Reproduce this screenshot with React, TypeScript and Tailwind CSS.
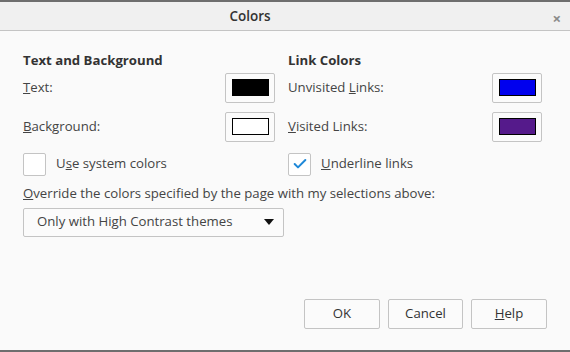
import { Check } from "lucide-react";

function Swatch({ color }: { color: string }) {
  return (
    <div className="flex h-[30px] w-[50px] items-center justify-center rounded-[2px] border border-[#c4c4c4] bg-[#fbfbfb]">
      <div className="h-[17px] w-[37px] border border-black" style={{ background: color }} />
    </div>
  );
}

function Row({ label, color }: { label: React.ReactNode; color: string }) {
  return (
    <div className="flex items-center justify-between">
      <span>{label}</span>
      <Swatch color={color} />
    </div>
  );
}

function Btn({ children }: { children: React.ReactNode }) {
  return (
    <button className="flex h-[30px] items-center justify-center rounded-[2px] border border-[#c4c4c4] bg-[#fbfbfb] text-[#333]">
      {children}
    </button>
  );
}

export default function App() {
  return (
    <div className="flex h-[352px] w-[570px] flex-col border-t-2 border-b-2 border-[#6e6e6e] bg-[#fafafa] text-[13.2px] text-[#444] [font-family:'Open_Sans',sans-serif]">
      {/* Title bar */}
      <div className="relative flex h-[29px] items-center justify-center border-b border-[#c4c4c4] bg-[#f0f0f0]">
        <span className="mr-[70px] text-[13.5px] font-semibold text-[#333]">Colors</span>
        <span className="absolute right-[9px] top-[5px] text-[15px] font-bold text-[#8a8a8a]">×</span>
      </div>

      <div className="flex flex-1 flex-col pl-[23px] pr-[28px] pt-[20px]">
        <div className="flex gap-[13px]">
          <div className="flex w-[252px] flex-col">
            <div className="mb-[2px] font-bold text-[#333]">Text and Background</div>
            <div className="flex flex-col gap-[9px]">
              <Row label={<><u>T</u>ext:</>} color="#000000" />
              <Row label={<><u>B</u>ackground:</>} color="#ffffff" />
            </div>
          </div>
          <div className="flex flex-1 flex-col">
            <div className="mb-[2px] font-bold text-[#333]">Link Colors</div>
            <div className="flex flex-col gap-[9px]">
              <Row label={<>Unvisited <u>L</u>inks:</>} color="#0000ee" />
              <Row label={<><u>V</u>isited Links:</>} color="#551a8b" />
            </div>
          </div>
        </div>

        <div className="mt-[11px] flex gap-[13px]">
          <div className="flex w-[252px] items-center gap-[10px]">
            <div className="h-[23px] w-[23px] rounded-[2px] border border-[#c4c4c4] bg-white" />
            <span>U<u>s</u>e system colors</span>
          </div>
          <div className="flex items-center gap-[10px]">
            <div className="flex h-[23px] w-[23px] items-center justify-center rounded-[2px] border border-[#c4c4c4] bg-white">
              <Check size={16} strokeWidth={3} className="text-[#1e88d8]" />
            </div>
            <span><u>U</u>nderline links</span>
          </div>
        </div>

        <div className="mt-[8px]"><u>O</u>verride the colors specified by the page with my selections above:</div>
        <div className="mt-[4px] flex h-[29px] w-[261px] items-center justify-between rounded-[2px] border border-[#c4c4c4] bg-[#fbfbfb] pl-[13px] pr-[9px]">
          <span>Only with High Contrast themes</span>
          <svg width="10" height="6" viewBox="0 0 10 6"><path d="M0 0h10L5 6z" fill="#111" /></svg>
        </div>

        <div className="mt-auto mb-[21px] mr-[-5px] flex justify-end gap-[8px]">
          <div className="w-[76px]"><Btn><span className="w-[74px]">OK</span></Btn></div>
          <div className="w-[75px]"><Btn><span className="w-[73px]">Cancel</span></Btn></div>
          <div className="w-[76px]"><Btn><span className="w-[74px]"><u>H</u>elp</span></Btn></div>
        </div>
      </div>
    </div>
  );
}
